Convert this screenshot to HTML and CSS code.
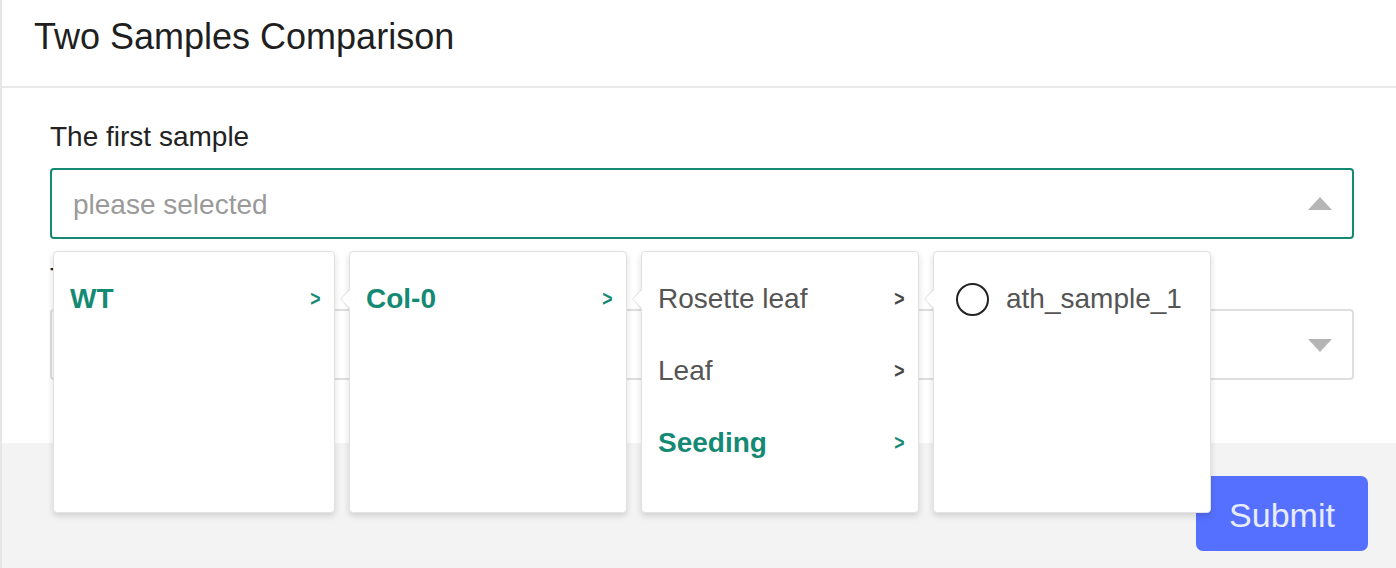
FILE: index.html
```html
<!DOCTYPE html>
<html>
<head>
<meta charset="utf-8">
<link rel="stylesheet" href="styles.css">
</head>
<body>
<div class="modal">
  <div class="modal-header">
    <h2 class="title">Two Samples Comparison</h2>
  </div>
  <div class="modal-body">
    <div class="field">
      <label class="label">The first sample</label>
      <div class="select is-open">
        <span class="placeholder">please selected</span>
        <span class="caret caret-up"></span>
      </div>
    </div>
    <div class="field">
      <label class="label">The second sample</label>
      <div class="select">
        <span class="placeholder"></span>
        <span class="caret caret-down"></span>
      </div>
    </div>
    <div class="cascader">
      <div class="panel first">
        <div class="item active"><span>WT</span><span class="chev">&gt;</span></div>
      </div>
      <div class="panel">
        <div class="item active"><span>Col-0</span><span class="chev">&gt;</span></div>
      </div>
      <div class="panel">
        <div class="item"><span>Rosette leaf</span><span class="chev">&gt;</span></div>
        <div class="item"><span>Leaf</span><span class="chev">&gt;</span></div>
        <div class="item active"><span>Seeding</span><span class="chev">&gt;</span></div>
      </div>
      <div class="panel">
        <div class="item leaf"><span class="radio"></span><span>ath_sample_1</span></div>
      </div>
    </div>
  </div>
  <div class="modal-footer">
    <button class="btn-submit">Submit</button>
  </div>
</div>
</body>
</html>
```
FILE: styles.css
```css
* { box-sizing: border-box; }
html, body { margin: 0; padding: 0; }
body {
  font-family: "Liberation Sans", Arial, Helvetica, sans-serif;
  background: #ffffff;
  color: #222;
}
.modal {
  width: 1396px;
  height: 568px;
  border-left: 2px solid #e6e6e6;
  display: flex;
  flex-direction: column;
  background: #fff;
}
.modal-header {
  height: 88px;
  border-bottom: 2px solid #e9e9e9;
  padding: 0 0 0 32px;
  display: flex;
  align-items: center;
}
.title {
  margin: 0 0 12px 0;
  font-size: 36px;
  font-weight: normal;
  color: #1f1f1f;
}
.modal-body {
  position: relative;
  height: 355px;
  padding: 34px 42px 0 48px;
}
.field { display: flex; flex-direction: column; }
.field + .field { margin-top: 24px; }
.label {
  font-size: 28px;
  color: #222;
  line-height: 30px;
  margin-bottom: 16px;
}
.select {
  height: 71px;
  border: 2px solid #dedede;
  border-radius: 4px;
  display: flex;
  align-items: center;
  justify-content: space-between;
  padding: 2px 20px 0 21px;
}
.select.is-open { border-color: #148a74; }
.placeholder { font-size: 28px; color: #9a9a9a; }
.caret {
  width: 0; height: 0;
  border-left: 12px solid transparent;
  border-right: 12px solid transparent;
}
.caret-up { border-bottom: 13px solid #b5b5b5; margin-bottom: 2px; }
.caret-down { border-top: 13px solid #b5b5b5; }

.cascader {
  position: absolute;
  left: 51px;
  top: 163px;
  display: flex;
  gap: 14px;
}
.panel {
  position: relative;
  width: 278px;
  height: 262px;
  background: #fff;
  border: 1px solid #e2e2e2;
  border-radius: 4px;
  box-shadow: 0 3px 6px rgba(0,0,0,0.14);
  padding-top: 11px;
}
.panel.first { width: 282px; }
.panel:not(.first)::before {
  content: "";
  position: absolute;
  left: -10px;
  top: 36px;
  width: 0; height: 0;
  border-top: 11px solid transparent;
  border-bottom: 11px solid transparent;
  border-right: 10px solid #e2e2e2;
}
.panel:not(.first)::after {
  content: "";
  position: absolute;
  left: -9px;
  top: 37px;
  width: 0; height: 0;
  border-top: 10px solid transparent;
  border-bottom: 10px solid transparent;
  border-right: 10px solid #fff;
}
.item {
  height: 72px;
  display: flex;
  align-items: center;
  justify-content: space-between;
  padding: 0 12px 0 16px;
  font-size: 28px;
  color: #555;
}
.item .chev {
  font-size: 22px;
  font-weight: bold;
  color: #444;
  transform: scaleX(0.8);
}
.item.active { color: #148a74; font-weight: bold; }
.item.active .chev { color: #148a74; }
.item.leaf { justify-content: flex-start; padding-left: 22px; }
.radio {
  width: 33px; height: 33px;
  border: 2px solid #222;
  border-radius: 50%;
  margin-right: 17px;
}
.modal-footer {
  flex: 1;
  background: #f3f3f3;
  display: flex;
  justify-content: flex-end;
  align-items: flex-start;
  padding: 33px 28px 0 0;
}
.btn-submit {
  width: 172px;
  height: 75px;
  padding-top: 4px;
  background: #5570ff;
  border: none;
  border-radius: 7px;
  color: #e8ecff;
  font-family: "Liberation Sans", Arial, sans-serif;
  font-size: 34px;
}
```
